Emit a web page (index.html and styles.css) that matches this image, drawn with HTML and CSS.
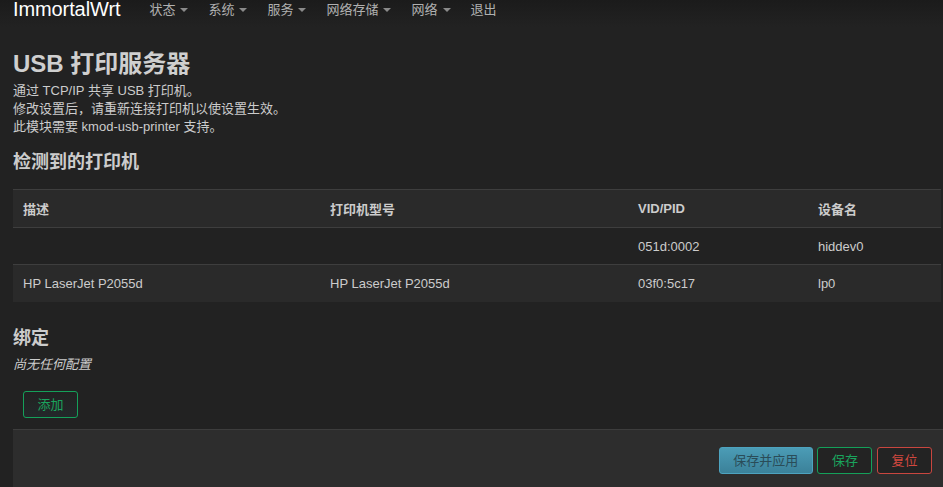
FILE: index.html
```html
<!DOCTYPE html>
<html lang="zh-CN">
<head>
<meta charset="utf-8">
<title>USB 打印服务器 - ImmortalWrt</title>
<link rel="stylesheet" href="styles.css">
</head>
<body>
<header class="navbar">
  <a class="brand" href="#">ImmortalWrt</a>
  <ul class="nav">
    <li><a href="#">状态<span class="caret"></span></a></li>
    <li><a href="#">系统<span class="caret"></span></a></li>
    <li><a href="#">服务<span class="caret"></span></a></li>
    <li><a href="#">网络存储<span class="caret"></span></a></li>
    <li><a href="#">网络<span class="caret"></span></a></li>
    <li><a href="#">退出</a></li>
  </ul>
</header>
<main class="main">
  <h2 class="title">USB 打印服务器</h2>
  <div class="desc">
    <div>通过 TCP/IP 共享 USB 打印机。</div>
    <div>修改设置后，请重新连接打印机以使设置生效。</div>
    <div>此模块需要 kmod-usb-printer 支持。</div>
  </div>
  <h3 class="section-title first">检测到的打印机</h3>
  <table class="table">
    <colgroup>
      <col class="c1"><col class="c2"><col class="c3"><col class="c4">
    </colgroup>
    <thead>
      <tr><th>描述</th><th>打印机型号</th><th>VID/PID</th><th>设备名</th></tr>
    </thead>
    <tbody>
      <tr class="even"><td></td><td></td><td>051d:0002</td><td>hiddev0</td></tr>
      <tr class="odd"><td>HP LaserJet P2055d</td><td>HP LaserJet P2055d</td><td>03f0:5c17</td><td>lp0</td></tr>
    </tbody>
  </table>
  <h3 class="section-title second">绑定</h3>
  <p class="empty">尚无任何配置</p>
  <div class="add-row"><button class="btn btn-add">添加</button></div>
  <div class="actions">
    <button class="btn btn-apply">保存并应用</button>
    <button class="btn btn-save">保存</button>
    <button class="btn btn-reset">复位</button>
  </div>
</main>
</body>
</html>
```
FILE: styles.css
```css
html, body {
  margin: 0;
  padding: 0;
}
body {
  background: #222222;
  color: #cccccc;
  font-family: "Liberation Sans", Arial, "Noto Sans CJK SC", sans-serif;
  font-size: 13px;
  overflow: hidden;
}
a { text-decoration: none; }

.navbar {
  height: 27px;
  display: flex;
  align-items: flex-start;
  padding-left: 13px;
  background: linear-gradient(#1b1b1b, #222222);
}
.brand {
  color: #ffffff;
  font-size: 20px;
  line-height: 18px;
  letter-spacing: -0.1px;
}
.nav {
  list-style: none;
  display: flex;
  margin: 0 0 0 19px;
  padding: 0;
}
.nav li a {
  display: flex;
  align-items: center;
  padding: 0 10px;
  line-height: 19px;
  color: #b0b0b0;
  font-size: 13px;
}
.caret {
  display: inline-block;
  width: 0;
  height: 0;
  margin-left: 5px;
  margin-top: 1px;
  border-left: 4px solid transparent;
  border-right: 4px solid transparent;
  border-top: 4px solid #8a8a8a;
}

.main {
  padding: 0 2px 0 13px;
}
.title {
  margin: 22px 0 0;
  font-size: 24px;
  line-height: 30px;
  font-weight: bold;
  color: #cfcfcf;
}
.desc {
  margin-top: 3px;
  line-height: 18px;
}
.section-title {
  margin: 0;
  font-size: 18px;
  line-height: 24px;
  font-weight: bold;
  color: #cccccc;
}
.section-title.first { margin-top: 14px; }
.section-title.second { margin-top: 24px; }

.table {
  margin-top: 15px;
  width: 928px;
  border-collapse: separate;
  border-spacing: 0;
  table-layout: fixed;
}
.c1 { width: 307px; }
.c2 { width: 308px; }
.c3 { width: 180px; }
.c4 { width: 133px; }
.table th, .table td {
  height: 37.7px;
  padding: 0 10px;
  text-align: left;
  vertical-align: middle;
  border-top: 1px solid #3e3e3e;
  font-size: 13px;
  color: #cccccc;
  box-sizing: border-box;
}
.table th { font-weight: bold; }
.table thead tr { background: #2a2a2a; }
.table tr.even { background: #222222; }
.table tr.odd { background: #2a2a2a; }

.empty {
  margin: 6px 0 0;
  font-style: italic;
  line-height: 18px;
}
.add-row {
  margin-top: 17px;
  padding-left: 10px;
}
.btn {
  font-family: "Liberation Sans", Arial, "Noto Sans CJK SC", sans-serif;
  font-size: 13px;
  height: 27px;
  padding: 0 13.5px;
  border-radius: 3px;
  border: 1px solid;
  background: #232323;
  cursor: pointer;
  line-height: 25px;
  box-sizing: border-box;
}
.btn-add {
  border-color: #15a05a;
  color: #1aa45d;
  background: linear-gradient(#222222, #23282a);
}
.actions {
  margin: 11px -2px 0 0;
  border-top: 1px solid #3d3d3d;
  background: #2d2d2d;
  padding: 17px 11px 30px 0;
  display: flex;
  justify-content: flex-end;
  gap: 4.6px;
}
.btn-apply {
  color: #2a4c58;
  border-color: #4da3bf;
  background: linear-gradient(#4b9cb6, #3b8199);
}
.btn-save {
  border-color: #14a05a;
  color: #1aa45d;
}
.btn-reset {
  border-color: #c9463f;
  color: #d2483f;
}
```
